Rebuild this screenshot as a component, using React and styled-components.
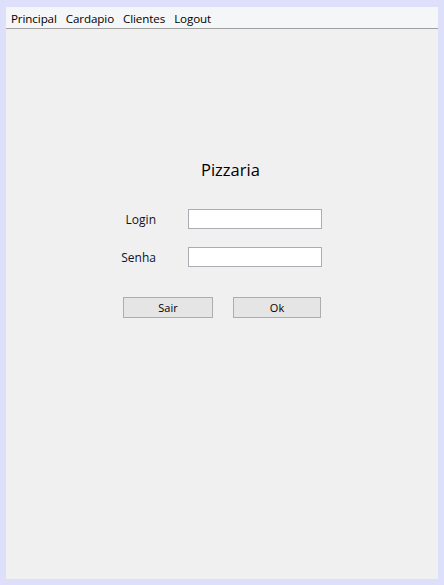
import React from "react";
import styled, { createGlobalStyle } from "styled-components";

const Global = createGlobalStyle`
  html, body { margin: 0; padding: 0; background: #dedffa; }
  body { font-family: "Open Sans", "Noto Sans", "DejaVu Sans", sans-serif; }
  * { box-sizing: border-box; }
`;

const Frame = styled.div`
  margin: 7px 6px 6px 6px;
  height: 572px;
  background: #f0f0f0;
  display: flex;
  flex-direction: column;
`;

const MenuBar = styled.nav`
  height: 22px;
  background: #f5f6f7;
  border-bottom: 1px solid #a0a0a0;
  display: flex;
  align-items: center;
  padding-left: 5px;
  padding-top: 1px;
  gap: 9px;
`;

const MenuItem = styled.span`
  font-size: 11.6px;
  color: #000;
  letter-spacing: -0.1px;
`;

const Content = styled.main`
  flex: 1;
  display: flex;
  flex-direction: column;
  padding-top: 130px;
`;

const Title = styled.h1`
  margin: 0 0 0 195px;
  font-size: 16.5px;
  font-weight: 400;
  color: #000;
  line-height: 22px;
`;

const Form = styled.div`
  margin: 28px 0 0 110px;
  display: grid;
  grid-template-columns: 40px 134px;
  column-gap: 32px;
  row-gap: 18px;
  align-items: center;
`;

const Label = styled.label`
  font-size: 12px;
  color: #101028;
  text-align: right;
`;

const Field = styled.input`
  height: 20px;
  width: 134px;
  border: 1px solid #abadb3;
  background: #fff;
  outline: none;
  padding: 0 3px;
`;

const Buttons = styled.div`
  margin: 30px 0 0 117px;
  display: flex;
  gap: 20px;
`;

const Button = styled.button`
  width: ${(p) => p.$w}px;
  height: 21px;
  border: 1px solid #adadad;
  background: #e5e5e5;
  font-family: inherit;
  font-size: 11px;
  color: #000;
  padding: 0;
  line-height: 19px;
`;

export default function App() {
  return (
    <>
      <Global />
      <Frame>
        <MenuBar>
          <MenuItem>Principal</MenuItem>
          <MenuItem>Cardapio</MenuItem>
          <MenuItem>Clientes</MenuItem>
          <MenuItem>Logout</MenuItem>
        </MenuBar>
        <Content>
          <Title>Pizzaria</Title>
          <Form>
            <Label>Login</Label>
            <Field />
            <Label>Senha</Label>
            <Field />
          </Form>
          <Buttons>
            <Button $w={90}>Sair</Button>
            <Button $w={88}>Ok</Button>
          </Buttons>
        </Content>
      </Frame>
    </>
  );
}
